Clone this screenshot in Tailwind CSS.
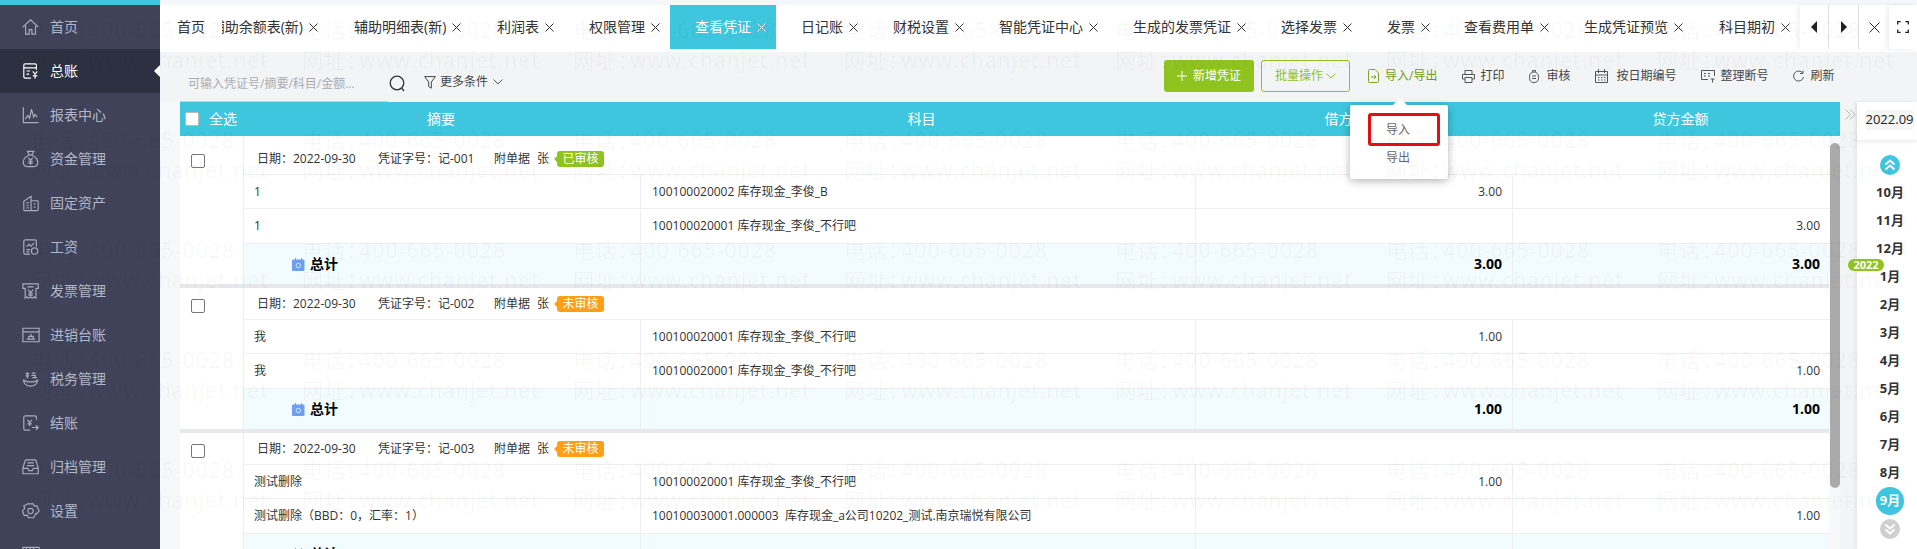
<!DOCTYPE html>
<html lang="zh-CN">
<head>
  <meta charset="UTF-8" />
  <title>查看凭证</title>
  <script src="https://cdn.jsdelivr.net/npm/@tailwindcss/browser@4"></script>
</head>
<body class="relative flex h-[549px] w-[1917px] overflow-hidden bg-[#f7f8f9] font-['Open_Sans','Noto_Sans_CJK_SC',sans-serif] text-xs text-[#333]">

  <!-- Sidebar -->
  <aside class="h-[549px] w-[160px] shrink-0 overflow-hidden bg-[#3f4259] border-t-[5px] border-[#3dc6de] text-sm text-[#b4b8c6]" id="sidebar"></aside>

  <!-- Main -->
  <main class="flex h-[549px] w-[1757px] flex-col overflow-hidden">
    <div class="h-[5px] shrink-0 bg-[#f5f7fa]"></div>

    <!-- Tabs -->
    <div class="flex h-[47px] shrink-0 bg-white">
      <div class="flex h-[44px] w-[1640px] overflow-hidden text-sm" id="tabs"></div>
      <div class="flex h-[44px] w-[117px] text-[#222] shadow-[-3px_0_4px_rgba(0,0,0,0.05)]">
        <button class="flex w-[29px] items-center justify-center border-r border-[#ddd]">
          <svg width="8" height="12" viewBox="0 0 8 12"><path d="M7 0 1 6l6 6z" fill="#222"/></svg>
        </button>
        <button class="flex w-[30px] items-center justify-center border-r border-[#ddd]">
          <svg width="8" height="12" viewBox="0 0 8 12"><path d="m1 0 6 6-6 6z" fill="#222"/></svg>
        </button>
        <button class="flex w-[30px] items-center justify-center">
          <svg width="11" height="11" viewBox="0 0 11 11" stroke="#222" fill="none"><path d="m.5.5 10 10M10.500.5l-10 10"/></svg>
        </button>
        <button class="flex w-[28px] items-center justify-center shadow-[-3px_0_4px_rgba(0,0,0,0.06)]">
          <svg width="12" height="12" viewBox="0 0 12 12" stroke="#222" fill="none" stroke-width="1.300"><path d="M.7 3.500V.7h3M8.300.7h3v2.800M11.300 8.500v2.800h-3M3.700 11.300h-3V8.500"/></svg>
        </button>
      </div>
    </div>

    <!-- Toolbar -->
    <div class="flex h-[50px] shrink-0 items-center bg-[#f3f4f6] pl-[20px] text-[#444]">
      <div class="flex h-full w-[208px] items-end border-b border-[#a9dfe9] pb-[9px] pl-[8px] text-[#a9adb3]">可输入凭证号/摘要/科目/金额...</div>
      <svg class="mt-[12px] ml-[1px]" width="17" height="17" viewBox="0 0 17 17" fill="none" stroke="#333" stroke-width="1.300"><circle cx="8" cy="8" r="6.800"/><path d="m12.500 13 2.500 3"/></svg>
      <svg class="mt-[10px] ml-[18px]" width="12" height="13" viewBox="0 0 12 13" fill="none" stroke="#444"><path d="M.6.600h10.800L7.300 6v6.200L4.700 10.500V6z"/></svg>
      <span class="mt-[10px] ml-[4px] text-[12px]">更多条件</span>
      <svg class="mt-[10px] ml-[5px]" width="10" height="6" viewBox="0 0 10 6" fill="none" stroke="#555"><path d="m.5.500 4.500 4.500L9.500.5"/></svg>

      <button class="mb-[2px] ml-[661px] flex h-[32px] w-[90px] items-center justify-center gap-[6px] rounded-[3px] bg-[#8fc31f] text-white">
        <svg width="10" height="10" viewBox="0 0 10 10" stroke="#fff" fill="none"><path d="M5 0v10M0 5h10"/></svg>新增凭证
      </button>
      <button class="mb-[2px] ml-[7px] flex h-[32px] w-[89px] items-center justify-center gap-[3px] rounded-[3px] border border-[#8fc31f] text-[#8fc31f]">
        批量操作<svg width="10" height="6" viewBox="0 0 10 6" fill="none" stroke="#8fc31f"><path d="m.5.500 4.500 4.500L9.500.5"/></svg>
      </button>
      <a class="mb-[2px] ml-[18px] flex items-center gap-[6px] text-[#6f9c12]">
        <svg width="11" height="14" viewBox="0 0 11 14" fill="none" stroke="#7ea61f"><path d="M7 .5H1.500a1 1 0 0 0-1 1v11a1 1 0 0 0 1 1h8a1 1 0 0 0 1-1V4zM3 8h5M6 6l2 2-2 2"/></svg>导入/导出
      </a>
      <a class="mb-[2px] ml-[25px] flex items-center gap-[5px]">
        <svg width="13" height="13" viewBox="0 0 13 13" fill="none" stroke="#555"><path d="M3 4V.5h7V4M.5 4.500h12V9H10M3 9H.5V4.500M3 7.500h7v5H3z"/></svg>打印
      </a>
      <a class="mb-[2px] ml-[25px] flex items-center gap-[7px]">
        <svg width="10" height="13" viewBox="0 0 10 13" fill="none" stroke="#555"><path d="M3.500 2V.5h3V2M5 2a4.500 4.500 0 0 1 4.500 4.500v2A4 4 0 0 1 5 12.500a4 4 0 0 1-4.500-4v-2A4.500 4.500 0 0 1 5 2zM3 6h4M3 8.500h4"/></svg>审核
      </a>
      <a class="mb-[2px] ml-[25px] flex items-center gap-[8px]">
        <svg width="13" height="14" viewBox="0 0 13 14" fill="none" stroke="#555"><path d="M.5 2.500h12v11H.500zM3.500 0v4M9.500 0v4M.5 6h12M3 8.500h1.500M6 8.500h1.500M9 8.500h1.500M3 11h1.500M6 11h1.500M9 11h1.500"/></svg>按日期编号
      </a>
      <a class="mb-[2px] ml-[25px] flex items-center gap-[5px]">
        <svg width="14" height="13" viewBox="0 0 14 13" fill="none" stroke="#555"><path d="M7 9.500H.5V.5h13V6M3 3.500h2M7 3.500h2M3 6h2M7 6h2M9.500 9h4M11.500 9v3.500"/></svg>整理断号
      </a>
      <a class="mb-[2px] ml-[25px] flex items-center gap-[6px]">
        <svg width="11" height="12" viewBox="0 0 11 12" fill="none" stroke="#555"><path d="M9.700 3.200A5 5 0 1 0 10.500 7M10 .5v3H7"/></svg>刷新
      </a>
    </div>

    <!-- Content row -->
    <div class="flex h-[447px] shrink-0 pl-[20px]">
      <div class="relative w-[1660px] shrink-0 overflow-hidden">
        <div class="flex h-[34px] items-center bg-[#3dc6de] text-sm text-white">
          <div class="flex w-[63px] items-center pl-[5px]">
            <span class="h-[14px] w-[14px] rounded-[2px] border border-[#bbb] bg-white"></span>
            <span class="ml-[10px]">全选</span>
          </div>
          <div class="w-[396px] text-center">摘要</div>
          <div class="w-[555px] pl-[10px] text-center">科目</div>
          <div class="w-[317px] text-center">借方金额</div>
          <div class="w-[329px] pl-[10px] text-center">贷方金额</div>
        </div>
        <div class="w-[1649px] bg-white" id="vouchers"></div>
        <div class="absolute top-[41px] right-0 h-[345px] w-[10px] rounded-[5px] bg-[#aaaaaa]"></div>
      </div>

      <div class="w-[17px] shrink-0 bg-[#f3f4f6] pt-[7px] pl-[5px]">
        <svg width="11" height="11" viewBox="0 0 11 11" fill="none" stroke="#b5b5b5"><path d="m.5.5 5 5-5 5M5 .5l5 5-5 5"/></svg>
      </div>

      <!-- Period panel -->
      <div class="relative w-[60px] shrink-0 bg-white shadow-[-2px_0_4px_rgba(0,0,0,0.06)]">
        <div class="flex h-[38px] items-center justify-center pb-[2px] pl-[5px] shadow-[0_2px_4px_rgba(0,0,0,0.08)]">
          <span class="flex h-[20px] w-[49px] items-center justify-center rounded-[3px] bg-[#f5f5f5] text-[13px] text-[#222]">2022.09</span>
        </div>
        <div class="flex flex-col items-center pl-[6px] text-[13px] font-bold text-[#333]" id="months"></div>
        <span class="absolute top-[157px] left-[-9px] flex h-[12px] w-[36px] items-center justify-center rounded-[6px] bg-[#8fc31f] text-[11px] font-bold text-white">2022</span>
      </div>
    </div>
  </main>

  <!-- Import/export popover -->
  <div class="absolute top-[105px] left-[1350px] h-[74px] w-[98px] rounded-[2px] bg-white text-[#666] shadow-[0_2px_8px_rgba(0,0,0,0.3)]">
    <span class="absolute top-[-5px] left-[45px] h-[10px] w-[10px] rotate-45 bg-white"></span>
    <div class="relative mt-[8px] ml-[18px] flex h-[33px] w-[72px] items-center rounded-[3px] border-[3px] border-[#e60f0f] pl-[15px]">导入</div>
    <div class="relative mt-[1px] ml-[36px] leading-[22px]">导出</div>
  </div>

  <!-- Watermark -->
  <div class="pointer-events-none absolute inset-0 z-50 overflow-hidden" id="watermark"></div>

  <script>
    const icons = [
      '<path d="M1 9.500 9.500 1.500 18 9.500M4 8v9.500h4v-5h3v5h4V8"/>',
      '<path d="M16 8V3a1.500 1.500 0 0 0-1.500-1.500h-11A1.500 1.500 0 0 0 2 3v13a1.500 1.500 0 0 0 1.500 1.500H10M2 6h14M5 9.500h4M5 13h3M12 10l2.500 3 2.500-3M14.500 13v5M12 15h5"/>',
      '<path d="M1.500 1v17h17M3.500 14l3-4 2 3 2-10 2.500 9 1.500-3 2.500 3"/>',
      '<path d="M6 1h7l-2 4H8zM8 5C3 7 1 11 1.500 14c.4 2.500 2 4 5 4h6c3 0 4.600-1.500 5-4C18 11 15.500 7 11 5M7 8l2.500 3L12 8M9.500 11v5M7 12h5M7 14h5"/>',
      '<path d="M2 7.500 10 2v16H3a1 1 0 0 1-1-1zM10 7h7a1 1 0 0 1 1 1v9a1 1 0 0 1-1 1h-7M5 9h2.500M5 12h2.500M5 15h2.500M13 10.500h2M13 14h2"/>',
      '<path d="M16 9V3a1.500 1.500 0 0 0-1.500-1.500h-11A1.500 1.500 0 0 0 2 3v13a1.500 1.500 0 0 0 1.500 1.500H9M5 9l3-2.500 2 2 3.500-3.500M5 12.500h4M5 15h3"/><circle cx="14" cy="14" r="3.500"/>',
      '<path d="M1 1.500h17v5h-2.500v11l-2-1.500-2 1.500-2-1.500-2 1.500-2-1.500-2 1.500v-11H1zM6 5h7M6.500 8l3 3 3-3M9.500 11v4M7 12h5M7 14h5"/>',
      '<path d="M1 2h18v15H1zM1 6h18M5.500 14h9M7.500 14v-3h5v3M10 11V8"/>',
      '<path d="M1.500 10c0 4.500 3.500 7.500 8 7.500s8-3 8-7.500M2 10.500c2 3 13.500 3 15.500 0M4 3.500h4M6 2v7M4 6h4M11 3h4M10.500 5.500h5M11.500 8h3v-2.500M15 8h1.500"/>',
      '<path d="M16 6V3a1.500 1.500 0 0 0-1.500-1.500h-11A1.500 1.500 0 0 0 2 3v13a1.500 1.500 0 0 0 1.500 1.500H9M6 6l2.500 3L11 6M8.500 9v4M6 10.500h5M11 14.500h7M15.500 12l2.500 2.500-2.500 2.500"/>',
      '<path d="M1 10.500 3.500 2.500a1.500 1.500 0 0 1 1.400-1h9.200a1.500 1.500 0 0 1 1.400 1L18 10.500V17H1zM1 11h5.500l1 2.500h4l1-2.500H18M6 5h7M5.500 8h8"/>',
      '<path d="M6.500 1.500h6l1 2.500 3-.5 2.500 6-2.500 3-1-.5-2.500 5h-6l-1-3-3.500.500L.5 9.500l2.500-3-1-2.500zM9.500 6.500a3 3 0 1 0 0 6 3 3 0 0 0 0-6z"/>',
      '<path d="M1 1h18v8H1zM5 1v3M9 1v3M13 1v3"/>'
    ];
    const menu = ["首页", "总账", "报表中心", "资金管理", "固定资产", "工资", "发票管理", "进销台账", "税务管理", "结账", "归档管理", "设置", ""];
    document.getElementById("sidebar").innerHTML = menu.map((name, i) => `
      <div class="relative flex h-[44px] items-center pl-[22px] ${i === 1 ? "bg-[#2d3040] text-white" : ""}">
        <svg class="shrink-0" width="18" height="18" viewBox="0 0 20 19" fill="none" stroke="${i === 1 ? "#fff" : "#a9aebf"}" stroke-width="1.300">${icons[i]}</svg>
        <span class="ml-[10px]">${name}</span>
        ${i === 1 ? '<span class="absolute right-0 h-0 w-0 border-y-[6px] border-r-[6px] border-y-transparent border-r-white"></span>' : ""}
      </div>`).join("");

    const tabs = [
      ["首页", 37, 17], ["辅助余额表(新)", 132], ["辅助明细表(新)", 143], ["利润表", 92], ["权限管理", 106],
      ["查看凭证", 106], ["日记账", 92], ["财税设置", 106], ["智能凭证中心", 134], ["生成的发票凭证", 148],
      ["选择发票", 106], ["发票", 77], ["查看费用单", 120], ["生成凭证预览", 135], ["科目期初", 106]
    ];
    const x = c => `<svg class="ml-[6px] shrink-0" width="9" height="9" viewBox="0 0 9 9" fill="none" stroke="${c}"><path d="m.5.500 8 8M8.500.5l-8 8"/></svg>`;
    document.getElementById("tabs").innerHTML = tabs.map(([name, w, pad], i) => `
      <div class="flex shrink-0 items-center whitespace-nowrap ${i === 5 ? "bg-[#3dc6de] text-white" : ""}" style="width:${w}px;padding-left:${pad || 25}px">
        ${i === 1 ? `<span class="flex w-[81px] justify-end overflow-hidden"><span class="shrink-0">${name}</span></span>` : name}
        ${i === 0 ? "" : x(i === 5 ? "#fff" : "#333")}
      </div>`).join("");

    const vouchers = [
      { no: "记-001", ok: true, top: 38, total: "3.00", rows: [
        ["1", "100100020002 库存现金_李俊_B", "3.00", ""],
        ["1", "100100020001 库存现金_李俊_不行吧", "", "3.00"] ] },
      { no: "记-002", ok: false, top: 31, total: "1.00", rows: [
        ["我", "100100020001 库存现金_李俊_不行吧", "1.00", ""],
        ["我", "100100020001 库存现金_李俊_不行吧", "", "1.00"] ] },
      { no: "记-003", ok: false, top: 31, total: "1.00", rows: [
        ["测试删除", "100100020001 库存现金_李俊_不行吧", "1.00", ""],
        ["测试删除（BBD：0，汇率：1）", "100100030001.000003&nbsp; 库存现金_a公司10202_测试.南京瑞悦有限公司", "", "1.00"] ] }
    ];
    document.getElementById("vouchers").innerHTML = vouchers.map(v => `
      <div class="flex border-b-[4px] border-[#e6e8eb]">
        <div class="w-[63px] shrink-0 bg-white pl-[11px]" style="padding-top:${v.top - 20}px">
          <span class="block h-[14px] w-[14px] rounded-[2px] border border-[#777]"></span>
        </div>
        <div class="flex-1 border-l border-[#eeeeee]">
          <div class="flex items-end pb-[1px] pl-[13px]" style="height:${v.top}px">
            <div class="flex h-[28px] items-center">
              <span class="w-[121px]">日期：2022-09-30</span>
              <span class="w-[116px]">凭证字号：${v.no}</span>
              <span class="w-[43px]">附单据</span>
              <span class="w-[20px]">张</span>
              <span class="relative flex h-[16px] w-[47px] items-center justify-center rounded-[3px] text-white ${v.ok ? "bg-[#8fc31f]" : "bg-[#ff9f17]"}">
                <span class="absolute left-[-3px] h-0 w-0 border-y-[3px] border-r-[3px] border-y-transparent ${v.ok ? "border-r-[#8fc31f]" : "border-r-[#ff9f17]"}"></span>
                ${v.ok ? "已审核" : "未审核"}
              </span>
            </div>
          </div>
          ${v.rows.map((r, i) => `
            <div class="flex border-t border-[#eeeeee] ${i ? "h-[35px]" : "h-[34px]"}">
              <div class="flex w-[396px] items-center pl-[10px]">${r[0]}</div>
              <div class="flex w-[555px] items-center border-l border-[#eeeeee] pl-[11px] whitespace-nowrap">${r[1]}</div>
              <div class="flex w-[317px] items-center justify-end border-l border-[#eeeeee] pr-[10px]">${r[2]}</div>
              <div class="flex w-[318px] items-center justify-end border-l border-[#eeeeee] pr-[10px]">${r[3]}</div>
            </div>`).join("")}
          <div class="flex h-[41px] border-t border-[#eeeeee] bg-[#f2fbfe] text-[14px] font-bold text-black">
            <div class="flex w-[396px] items-center pl-[48px]">
              <svg class="mr-[5px]" width="13" height="13" viewBox="0 0 13 13"><rect y="1.500" width="12.500" height="11.500" rx="1" fill="#6b9ff0"/><path d="M3 0h1v3H3zM9 0h1v3H9z" fill="#6b9ff0"/><circle cx="6.300" cy="7.500" r="2.200" fill="none" stroke="#dce9ff"/></svg>总计
            </div>
            <div class="w-[555px] border-l border-[#eeeeee]"></div>
            <div class="flex w-[317px] items-center justify-end border-l border-[#eeeeee] pr-[10px]">${v.total}</div>
            <div class="flex w-[318px] items-center justify-end border-l border-[#eeeeee] pr-[10px]">${v.total}</div>
          </div>
        </div>
      </div>`).join("");

    const chevron = d => `<svg width="12" height="12" viewBox="0 0 12 12" fill="none" stroke="#fff" stroke-width="2"><path d="${d}"/></svg>`;
    const months = ["10月", "11月", "12月", "1月", "2月", "3月", "4月", "5月", "6月", "7月", "8月"];
    document.getElementById("months").innerHTML = `
      <span class="mt-[15px] mb-[4px] flex h-[20px] w-[20px] items-center justify-center rounded-full bg-[#3dc6de]">${chevron("M1.500 5.500 6 1.500l4.500 4M1.500 10.500 6 6.500l4.500 4")}</span>
      ${months.map(m => `<span class="flex h-[28px] items-center">${m}</span>`).join("")}
      <span class="flex h-[28px] w-[28px] items-center justify-center rounded-full bg-[#3dc6de] text-white">9月</span>
      <span class="mt-[4px] flex h-[20px] w-[20px] items-center justify-center rounded-full bg-[#cfcfcf]">${chevron("M1.500 1.500 6 5.500l4.500-4M1.500 6.500 6 10.500l4.500-4")}</span>`;

    let marks = "";
    for (let r = 0; r < 5; r++) {
      for (let c = 0; c < 8; c++) {
        marks += `
          <div class="absolute w-[240px] text-[21px] leading-[30px] tracking-[1.1px] whitespace-nowrap text-black/[0.04]" style="left:${31 + c * 271}px;top:${15 + r * 110}px">
            <div>电话<span class="inline-block w-[13px]">：</span>400-665-0028</div>
            <div>网址<span class="inline-block w-[13px]">：</span>www.chanjet.net</div>
          </div>`;
      }
    }
    document.getElementById("watermark").innerHTML = marks;
  </script>
</body>
</html>
